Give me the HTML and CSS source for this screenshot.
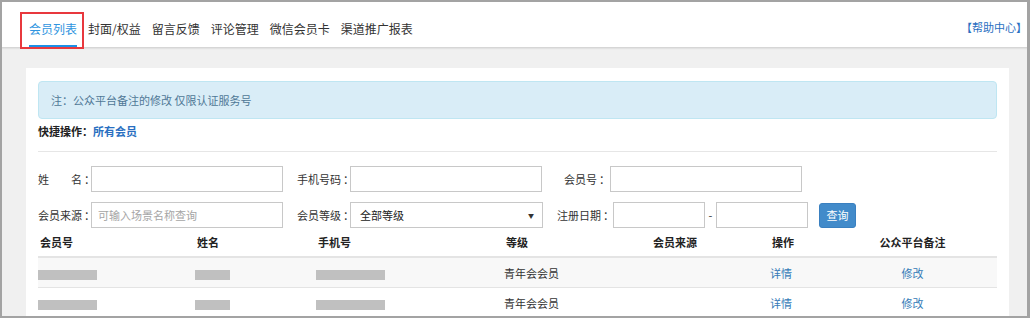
FILE: index.html
```html
<!DOCTYPE html>
<html lang="zh-CN">
<head>
  <meta charset="UTF-8">
  <title>会员列表</title>
  <link rel="stylesheet" href="styles.css">
</head>
<body>
  <div class="frame">
    <div class="topbar">
      <div class="tabs">
        <a class="tab active">会员列表</a>
        <a class="tab">封面/权益</a>
        <a class="tab">留言反馈</a>
        <a class="tab">评论管理</a>
        <a class="tab">微信会员卡</a>
        <a class="tab">渠道推广报表</a>
      </div>
      <a class="help">【帮助中心】</a>
    </div>
    <div class="mark"></div>

    <div class="main">
      <div class="panel">
        <div class="alert">注：公众平台备注的修改 仅限认证服务号</div>
        <div class="quick">快捷操作：<a>所有会员</a></div>
        <div class="divider"></div>

        <div class="form">
          <div class="form-row">
            <label class="lbl">姓&emsp;&emsp;名<span class="colon">：</span></label>
            <input class="field" type="text">
            <label class="lbl gap">手机号码<span class="colon">：</span></label>
            <input class="field" type="text">
            <label class="lbl lbl-right gap">会员号<span class="colon">：</span></label>
            <input class="field" type="text">
          </div>
          <div class="form-row">
            <label class="lbl">会员来源<span class="colon">：</span></label>
            <input class="field" type="text" placeholder="可输入场景名称查询">
            <label class="lbl gap">会员等级<span class="colon">：</span></label>
            <div class="select"><span>全部等级</span><span class="arrow">▼</span></div>
            <label class="lbl lbl-date gap">注册日期<span class="colon">：</span></label>
            <input class="field field-date" type="text">
            <span class="dash">-</span>
            <input class="field field-date" type="text">
            <button class="btn">查询</button>
          </div>
        </div>

        <table class="grid">
          <colgroup>
            <col style="width:157px">
            <col style="width:121px">
            <col style="width:188px">
            <col style="width:147px">
            <col style="width:119px">
            <col style="width:58px">
            <col>
          </colgroup>
          <thead>
            <tr>
              <th>会员号</th>
              <th>姓名</th>
              <th>手机号</th>
              <th>等级</th>
              <th>会员来源</th>
              <th>操作</th>
              <th class="center">公众平台备注</th>
            </tr>
          </thead>
          <tbody>
            <tr class="odd">
              <td><span class="mask mask-id"></span></td>
              <td><span class="mask mask-name"></span></td>
              <td><span class="mask mask-phone"></span></td>
              <td>青年会会员</td>
              <td></td>
              <td><a>详情</a></td>
              <td class="center"><a>修改</a></td>
            </tr>
            <tr>
              <td><span class="mask mask-id"></span></td>
              <td><span class="mask mask-name"></span></td>
              <td><span class="mask mask-phone"></span></td>
              <td>青年会会员</td>
              <td></td>
              <td><a>详情</a></td>
              <td class="center"><a>修改</a></td>
            </tr>
          </tbody>
        </table>
      </div>
    </div>
  </div>
</body>
</html>
```

FILE: styles.css
```css
    body {
      margin: 0;
      font-family: "Noto Sans CJK SC", "Microsoft YaHei", sans-serif;
      font-size: 11px;
      color: #333;
    }

    a {
      color: #337ab7;
      text-decoration: none;
    }

    .frame {
      position: relative;
      width: 1030px;
      height: 318px;
      box-sizing: border-box;
      border: 2px solid #a3a3a3;
      border-right-width: 3px;
      background-color: #f0f0f0;
      overflow: hidden;
    }

    /* top navigation */
    .topbar {
      display: flex;
      justify-content: space-between;
      align-items: flex-end;
      height: 45px;
      background-color: #fff;
      border-bottom: 1px solid #d6d6d6;
      box-shadow: 0 1px 1px #e2e2e2;
      padding-left: 27px;
    }

    .tabs {
      display: flex;
      gap: 11px;
    }

    .tab {
      font-size: 12px;
      line-height: 18px;
      color: #333;
      padding-bottom: 7px;
      border-bottom: 2px solid transparent;
    }

    .tab.active {
      color: #2f95e0;
      border-bottom-color: #1d8fe6;
    }

    .help {
      align-self: center;
      margin-top: 4px;
      font-size: 11px;
      color: #2a6fc1;
    }

    /* red annotation box */
    .mark {
      position: absolute;
      left: 18px;
      top: 10px;
      width: 60px;
      height: 33px;
      border: 2px solid #e8383d;
    }

    .main {
      padding: 20px 18px 0 24px;
    }

    .panel {
      background-color: #fff;
      padding: 13px 12px 0 12px;
      height: 260px;
    }

    .alert {
      height: 36px;
      line-height: 36px;
      padding-left: 12px;
      background-color: #d9edf7;
      border: 1px solid #bfe6f2;
      border-radius: 4px;
      color: #4f7896;
    }

    .quick {
      margin-top: 4px;
      line-height: 16px;
      font-weight: bold;
      color: #222;
    }

    .quick a {
      color: #2a6fc1;
    }

    .divider {
      margin: 12px 0 14px;
      border-top: 1px solid #e6e6e6;
    }

    /* search form */
    .form-row {
      display: flex;
      align-items: center;
      height: 26px;
      margin-bottom: 10px;
    }

    .form-row:last-child {
      margin-bottom: 0;
    }

    .lbl {
      width: 53px;
      color: #333;
      white-space: nowrap;
    }

    .colon {
      margin-left: 2px;
    }

    .lbl.gap {
      margin-left: 14px;
    }

    .lbl-right {
      width: 54px;
      text-align: right;
    }

    .lbl-date {
      width: 56px;
    }

    .field {
      width: 192px;
      height: 26px;
      box-sizing: border-box;
      border: 1px solid #c8c8c8;
      padding: 0 6px;
      font: inherit;
      margin: 0;
    }

    .field::placeholder {
      color: #a5a5a5;
    }

    .field-date {
      width: 92px;
    }

    .dash {
      width: 11px;
      text-align: center;
    }

    .select {
      display: flex;
      justify-content: space-between;
      align-items: center;
      width: 193px;
      height: 26px;
      box-sizing: border-box;
      border: 1px solid #c8c8c8;
      padding: 0 8px 0 9px;
      color: #222;
    }

    .arrow {
      font-size: 6px;
      color: #333;
    }

    .btn {
      margin-left: 11px;
      width: 37px;
      height: 25px;
      padding: 0;
      border: 1px solid #3a80c0;
      border-radius: 3px;
      background-color: #428bca;
      color: #fff;
      font: inherit;
    }

    /* member table */
    .grid {
      width: 959px;
      table-layout: fixed;
      border-collapse: collapse;
    }

    .grid th {
      height: 28px;
      padding: 0 0 0 2px;
      text-align: left;
      font-weight: bold;
      color: #222;
      border-bottom: 2px solid #e4e4e4;
    }

    .grid td {
      height: 29px;
      padding: 0;
      border-bottom: 1px solid #e4e4e4;
      vertical-align: middle;
    }

    .grid .center {
      text-align: center;
      padding-left: 0;
    }

    .grid tr.odd td {
      background-color: #f8f8f8;
    }

    .mask {
      display: inline-block;
      height: 10px;
      background-color: #c0c0c0;
      vertical-align: middle;
    }

    .mask-id {
      width: 59px;
    }

    .mask-name {
      width: 35px;
    }

    .mask-phone {
      width: 69px;
    }
```
